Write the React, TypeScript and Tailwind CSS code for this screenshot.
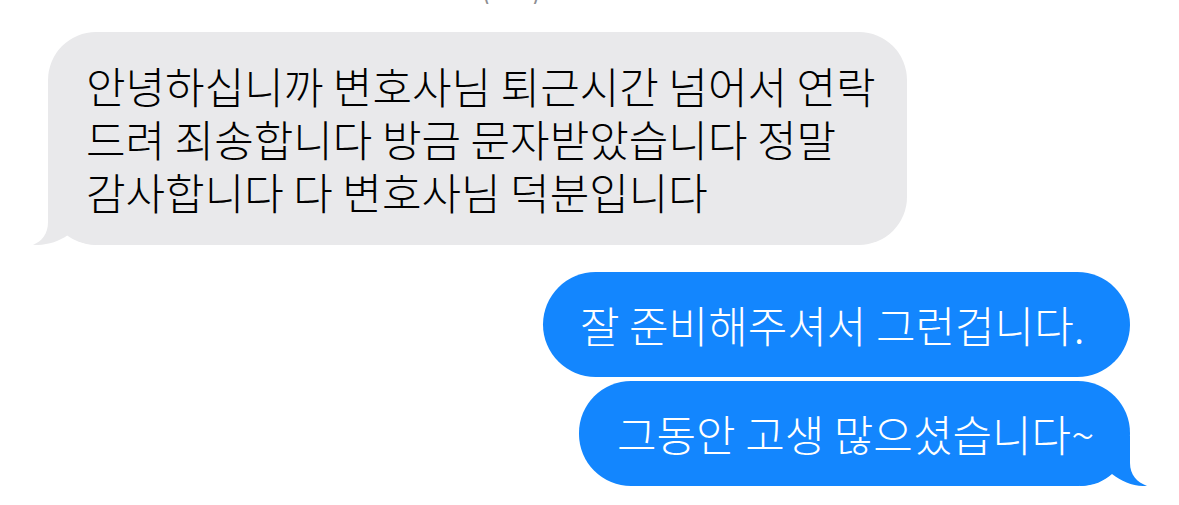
import React from "react";

const font = { fontFamily: '"Noto Sans CJK KR", "Noto Sans", sans-serif' };

export default function App() {
  return (
    <div
      className="w-[1179px] h-[505px] bg-white overflow-hidden text-black"
      style={font}
    >
      <div className="h-[4px] overflow-hidden flex items-end pl-[482px]">
        <span className="text-[26px] leading-none text-[#8e8e93] whitespace-pre">
          (       )
        </span>
      </div>

      <div className="mt-[28px] ml-[48px] w-[859px] relative rounded-[48px] bg-[#e9e9eb] pl-[38px] py-[27px] text-[43px] leading-[53px] whitespace-nowrap font-light">
        <svg
          className="absolute left-[-16px] bottom-0"
          width="70"
          height="50"
          viewBox="0 0 70 50"
        >
          <path
            d="M16 0 L16 27 C16 39 10 46 1 50 C14 50.5 26 47 36 40 C44 46 54 50 68 50 L68 0 Z"
            fill="#e9e9eb"
          />
        </svg>
        <div className="relative">
          안녕하십니까 변호사님 퇴근시간 넘어서 연락
          <br />
          드려 죄송합니다 방금 문자받았습니다 정말
          <br />
          감사합니다 다 변호사님 덕분입니다
        </div>
      </div>

      <div className="mt-[27px] flex flex-col items-end pr-[49px] text-white text-[43px] leading-[53px] whitespace-nowrap font-light">
        <div className="w-[587px] rounded-full bg-[#1386fe] pl-[37px] py-[26px]">
          잘 준비해주셔서 그런겁니다.
        </div>
        <div className="mt-[4px] w-[551px] relative rounded-[52px] bg-[#1386fe] pl-[38px] py-[26px]">
          <svg
            className="absolute right-[-17px] bottom-0"
            width="70"
            height="50"
            viewBox="0 0 70 50"
          >
            <path
              d="M53 0 L53 27 C53 39 60 46 70 50 C57 50.5 45 46 35 38 C27 45 17 50 3 50 L3 0 Z"
              fill="#1386fe"
            />
          </svg>
          <div className="relative">그동안 고생 많으셨습니다~</div>
        </div>
      </div>
    </div>
  );
}
